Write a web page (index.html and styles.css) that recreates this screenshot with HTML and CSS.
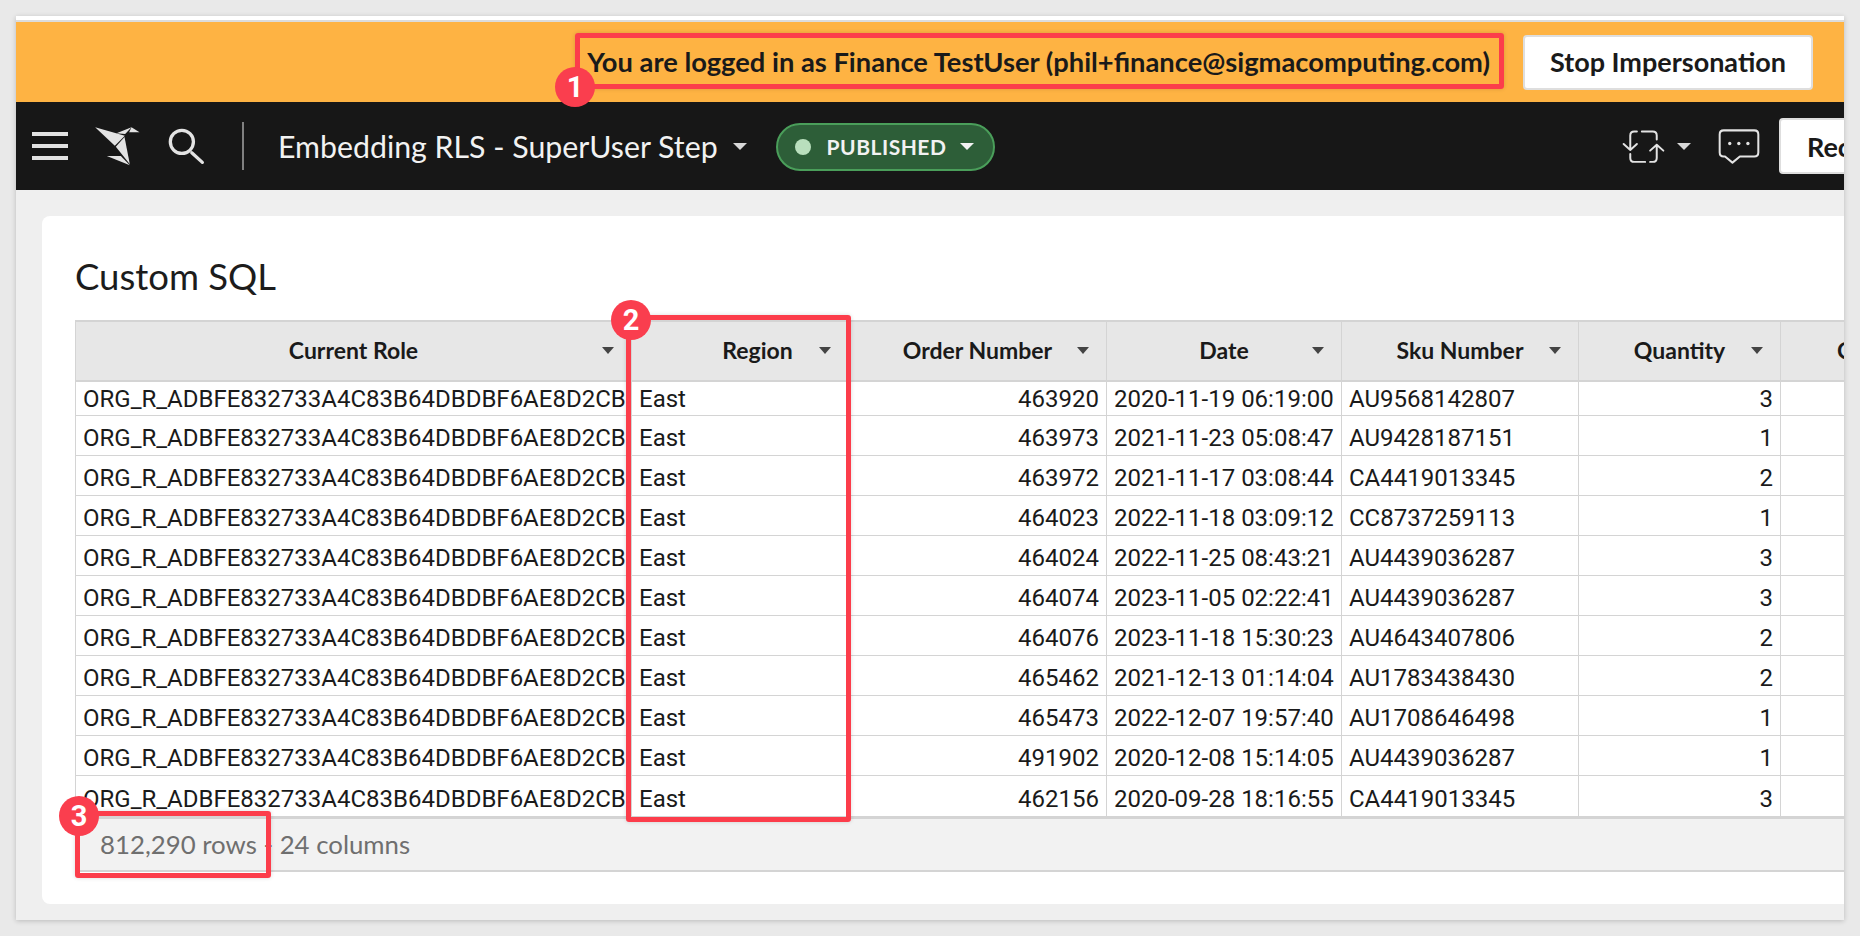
FILE: index.html
```html
<!DOCTYPE html>
<html lang="en">

<head>
    <meta charset="UTF-8">
    <meta name="viewport" content="width=device-width, initial-scale=1.0">
    <title>Embedding RLS - SuperUser Step</title>
    <link rel="stylesheet" href="styles.css">
</head>

<body>
    <div class="window">
        <div class="top-strip"></div>

        <div class="banner">
            <span class="banner-text">You are logged in as Finance TestUser (phil+finance@sigmacomputing.com)</span>
            <button class="stop-btn">Stop Impersonation</button>
        </div>

        <nav class="navbar">
            <div class="burger"><span></span><span></span><span></span></div>
            <svg class="logo" viewBox="280 108 140 120">
                <path d="M283 112 L372 137 L342 167 Z" />
                <path d="M347 130 L392 112 L373 132 Z" />
                <path d="M392 112 L416 127 L385 127 Z" />
                <path d="M345 170 L371 141 L387 223 Z" />
                <path d="M318 198 L360 198 L387 226 Z" />
            </svg>
            <svg class="search" viewBox="500 110 115 115">
                <circle cx="545" cy="155" r="35" />
                <path d="M575 188 L607 217" />
            </svg>
            <div class="divider"></div>
            <span class="doc-title">Embedding RLS - SuperUser Step</span>
            <span class="caret caret-title"></span>
            <div class="pill">
                <span class="pill-dot"></span>
                <span class="pill-text">PUBLISHED</span>
                <span class="caret caret-pill"></span>
            </div>
            <div class="nav-right">
                <svg class="sync" viewBox="665 385 130 105">
                    <path d="M710 392 H702 Q690 392 690 404 V448 M670 430 L690 448 L710 430" />
                    <path d="M750 484 H758 Q770 484 770 472 V432 M750 450 L770 432 L790 450" />
                    <path d="M725 392 H758 Q770 392 770 404 V416 M690 460 V472 Q690 484 702 484 H735" />
                </svg>
                <span class="caret caret-sync"></span>
                <svg class="chat" viewBox="955 388 125 104">
                    <path class="chat-line" d="M972 392 H1063 Q1075 392 1075 404 V458 Q1075 470 1063 470 H1020 L998 488 L976 470 H972 Q960 470 960 458 V404 Q960 392 972 392 Z" />
                    <circle cx="990" cy="431" r="5" />
                    <circle cx="1017" cy="431" r="5" />
                    <circle cx="1044" cy="431" r="5" />
                </svg>
                <button class="rec-btn">Rec</button>
            </div>
        </nav>

        <main class="content">
            <section class="card">
                <h1 class="card-title">Custom SQL</h1>
                <div class="table-wrap">
                    <table class="grid">
                        <colgroup>
                            <col class="col-role">
                            <col class="col-region">
                            <col class="col-order">
                            <col class="col-date">
                            <col class="col-sku">
                            <col class="col-qty">
                            <col class="col-cost">
                        </colgroup>
                        <thead>
                            <tr>
                                <th><div class="hd hd-role"><span></span><span>Current Role</span><i class="caret caret-hd"></i></div></th>
                                <th><div class="hd hd-region"><span></span><span>Region</span><i class="caret caret-hd"></i></div></th>
                                <th><div class="hd"><span></span><span>Order Number</span><i class="caret caret-hd"></i></div></th>
                                <th><div class="hd"><span></span><span>Date</span><i class="caret caret-hd"></i></div></th>
                                <th><div class="hd"><span></span><span>Sku Number</span><i class="caret caret-hd"></i></div></th>
                                <th><div class="hd"><span></span><span>Quantity</span><i class="caret caret-hd"></i></div></th>
                                <th><div class="hd"><span></span><span>Cost</span><i class="caret caret-hd"></i></div></th>
                            </tr>
                        </thead>
                        <tbody>
                            <tr class="first-row"><td>ORG_R_ADBFE832733A4C83B64DBDBF6AE8D2CB</td><td>East</td><td class="num">463920</td><td>2020-11-19 06:19:00</td><td>AU9568142807</td><td class="num">3</td><td></td></tr>
                            <tr><td>ORG_R_ADBFE832733A4C83B64DBDBF6AE8D2CB</td><td>East</td><td class="num">463973</td><td>2021-11-23 05:08:47</td><td>AU9428187151</td><td class="num">1</td><td></td></tr>
                            <tr><td>ORG_R_ADBFE832733A4C83B64DBDBF6AE8D2CB</td><td>East</td><td class="num">463972</td><td>2021-11-17 03:08:44</td><td>CA4419013345</td><td class="num">2</td><td></td></tr>
                            <tr><td>ORG_R_ADBFE832733A4C83B64DBDBF6AE8D2CB</td><td>East</td><td class="num">464023</td><td>2022-11-18 03:09:12</td><td>CC8737259113</td><td class="num">1</td><td></td></tr>
                            <tr><td>ORG_R_ADBFE832733A4C83B64DBDBF6AE8D2CB</td><td>East</td><td class="num">464024</td><td>2022-11-25 08:43:21</td><td>AU4439036287</td><td class="num">3</td><td></td></tr>
                            <tr><td>ORG_R_ADBFE832733A4C83B64DBDBF6AE8D2CB</td><td>East</td><td class="num">464074</td><td>2023-11-05 02:22:41</td><td>AU4439036287</td><td class="num">3</td><td></td></tr>
                            <tr><td>ORG_R_ADBFE832733A4C83B64DBDBF6AE8D2CB</td><td>East</td><td class="num">464076</td><td>2023-11-18 15:30:23</td><td>AU4643407806</td><td class="num">2</td><td></td></tr>
                            <tr><td>ORG_R_ADBFE832733A4C83B64DBDBF6AE8D2CB</td><td>East</td><td class="num">465462</td><td>2021-12-13 01:14:04</td><td>AU1783438430</td><td class="num">2</td><td></td></tr>
                            <tr><td>ORG_R_ADBFE832733A4C83B64DBDBF6AE8D2CB</td><td>East</td><td class="num">465473</td><td>2022-12-07 19:57:40</td><td>AU1708646498</td><td class="num">1</td><td></td></tr>
                            <tr><td>ORG_R_ADBFE832733A4C83B64DBDBF6AE8D2CB</td><td>East</td><td class="num">491902</td><td>2020-12-08 15:14:05</td><td>AU4439036287</td><td class="num">1</td><td></td></tr>
                            <tr><td>ORG_R_ADBFE832733A4C83B64DBDBF6AE8D2CB</td><td>East</td><td class="num">462156</td><td>2020-09-28 18:16:55</td><td>CA4419013345</td><td class="num">3</td><td></td></tr>
                        </tbody>
                    </table>
                </div>
                <div class="table-foot">812,290 rows - 24 columns</div>
            </section>
        </main>

        <!-- red annotations on top of the screenshot -->
        <div class="mark mark-1"></div>
        <div class="mark mark-2"></div>
        <div class="mark mark-3"></div>
        <div class="badge badge-1">1</div>
        <div class="badge badge-2">2</div>
        <div class="badge badge-3">3</div>
    </div>
</body>

</html>
```

FILE: styles.css
```css
* {
    box-sizing: border-box;
}

html,
body {
    margin: 0;
    height: 936px;
    overflow: hidden;
    background: #e9e9e9;
}

body {
    padding: 16px 16px 0 16px;
    font-family: "Lato", "Noto Sans", sans-serif;
    color: #1a1a1a;
}

.window {
    position: relative;
    width: 1828px;
    height: 904px;
    overflow: hidden;
    display: flex;
    flex-direction: column;
    background: #efefef;
    box-shadow: 0 1px 5px rgba(0, 0, 0, 0.2);
}

.top-strip {
    height: 6px;
    background: #fff;
    border-bottom: 2px solid #dcdcdc;
}

.banner {
    height: 80px;
    flex: none;
    display: flex;
    align-items: center;
    justify-content: flex-end;
    padding-right: 31px;
    background: #feb343;
}

.banner-text {
    font-size: 27.3px;
    font-weight: 700;
    margin-right: 33px;
    padding-bottom: 2px;
}

.stop-btn {
    width: 290px;
    height: 55px;
    padding-bottom: 3px;
    background: #fff;
    border: 2px solid #dedede;
    border-radius: 4px;
    font: 700 27px "Lato", sans-serif;
    color: #1a1a1a;
}

.navbar {
    height: 88px;
    flex: none;
    display: flex;
    align-items: center;
    padding-left: 16px;
    background: #171717;
    color: #f2f2f2;
}

.burger {
    width: 36px;
    display: flex;
    flex-direction: column;
    gap: 8px;
}

.burger span {
    height: 4px;
    background: #e3e3e3;
}

.logo {
    width: 47px;
    height: 40px;
    margin-left: 26px;
    fill: #e3e3e3;
}

.search {
    width: 38px;
    height: 38px;
    margin-left: 26px;
    fill: none;
    stroke: #e3e3e3;
    stroke-width: 10;
    stroke-linecap: round;
}

.divider {
    width: 2px;
    height: 48px;
    margin-left: 37px;
    background: #808080;
}

.doc-title {
    margin-left: 34px;
    font-size: 30.3px;
}

.caret {
    display: inline-block;
    width: 0;
    height: 0;
    border-left: 7px solid transparent;
    border-right: 7px solid transparent;
    border-top: 7px solid #d8d8d8;
}

.caret-title {
    margin-left: 15px;
}

.pill {
    width: 219px;
    height: 48px;
    margin-left: 29px;
    margin-top: 1px;
    display: flex;
    align-items: center;
    padding-left: 17px;
    background: #2d5e38;
    border: 2px solid #4a9e5a;
    border-radius: 24px;
}

.pill-dot {
    width: 16px;
    height: 16px;
    border-radius: 50%;
    background: #b9dfbd;
}

.pill-text {
    margin-left: 16px;
    font-size: 21px;
    font-weight: 700;
    letter-spacing: 0.5px;
}

.caret-pill {
    margin-left: 14px;
    border-top-color: #f2f2f2;
}

.nav-right {
    margin-left: auto;
    margin-right: -35px;
    display: flex;
    align-items: center;
}

.sync {
    width: 43px;
    height: 35px;
    fill: none;
    stroke: #e3e3e3;
    stroke-width: 6;
    stroke-linecap: round;
    stroke-linejoin: round;
}

.caret-sync {
    margin-left: 12px;
}

.chat {
    width: 42px;
    height: 35px;
    margin-left: 27px;
    fill: #e3e3e3;
}

.chat-line {
    fill: none;
    stroke: #e3e3e3;
    stroke-width: 6;
    stroke-linejoin: round;
}

.rec-btn {
    width: 100px;
    height: 56px;
    margin-left: 19px;
    padding-left: 26px;
    text-align: left;
    background: #fff;
    border: 2px solid #dedede;
    border-radius: 4px;
    font: 700 27px "Lato", sans-serif;
    color: #1a1a1a;
}

.content {
    flex: 1;
    padding: 26px 0 16px 26px;
    min-height: 0;
}

.card {
    height: 100%;
    padding: 0 0 0 33px;
    background: #fff;
    border-radius: 8px 0 0 8px;
    overflow: hidden;
}

.card-title {
    margin: 0;
    height: 104px;
    padding-top: 35px;
    font-size: 36.5px;
    line-height: 50px;
    font-weight: 400;
    color: #1c1c1c;
}

.table-wrap {
    overflow: hidden;
}

.grid {
    width: 1866px;
    table-layout: fixed;
    border-collapse: separate;
    border-spacing: 0;
    border-left: 1px solid #d4d4d4;
    font-family: "Roboto", sans-serif;
    font-size: 24px;
}

.col-role { width: 556px; }
.col-region { width: 217px; }
.col-order { width: 258px; }
.col-date { width: 235px; }
.col-sku { width: 237px; }
.col-qty { width: 202px; }
.col-cost { width: 160px; }

.grid th {
    height: 62px;
    padding: 0 0 2px;
    background: #e7e7e7;
    border-top: 2px solid #d4d4d4;
    border-bottom: 2px solid #d4d4d4;
    border-right: 1px solid #d4d4d4;
    font-family: "Lato", "Noto Sans", sans-serif;
    font-size: 23px;
    font-weight: 700;
}

.hd {
    display: grid;
    grid-template-columns: 1fr auto 1fr;
    align-items: center;
    padding-right: 17px;
    padding-left: 17px;
}

.hd-role {
    padding-right: 17px;
}

.hd-region {
    padding-left: 52px;
}

.caret-hd {
    justify-self: end;
    border-top-color: #444;
    border-left-width: 6px;
    border-right-width: 6px;
}

.grid td {
    height: 40px;
    padding: 5px 7px 0;
    border-bottom: 1px solid #d4d4d4;
    border-right: 1px solid #d4d4d4;
    white-space: nowrap;
    overflow: hidden;
    color: #1a1a1a;
}

.grid .first-row td {
    height: 34px;
    padding-top: 0;
}

.grid tr:last-child td {
    border-bottom: 0;
}

.grid td.num {
    text-align: right;
}

.table-foot {
    height: 56px;
    padding: 0 0 2px 25px;
    display: flex;
    align-items: center;
    background: #f2f2f2;
    border-top: 3px solid #d4d4d4;
    border-bottom: 2px solid #d4d4d4;
    font-size: 25.8px;
    color: #6f6f6f;
}

.mark {
    position: absolute;
    border: 5px solid #fc3d4b;
    border-radius: 3px;
    box-shadow: 0 0 4px rgba(0, 0, 0, 0.15);
}

.mark-1 {
    left: 559px;
    top: 17px;
    width: 929px;
    height: 56px;
}

.mark-2 {
    left: 610px;
    top: 299px;
    width: 225px;
    height: 507px;
}

.mark-3 {
    left: 59px;
    top: 795px;
    width: 196px;
    height: 67px;
}

.badge {
    position: absolute;
    width: 40px;
    height: 40px;
    display: flex;
    align-items: center;
    justify-content: center;
    border-radius: 50%;
    background: #fa3e4e;
    color: #fff;
    font: 700 29px "Roboto", sans-serif;
}

.badge-1 {
    left: 539px;
    top: 51px;
}

.badge-2 {
    left: 595px;
    top: 284px;
}

.badge-3 {
    left: 43px;
    top: 780px;
}
```
